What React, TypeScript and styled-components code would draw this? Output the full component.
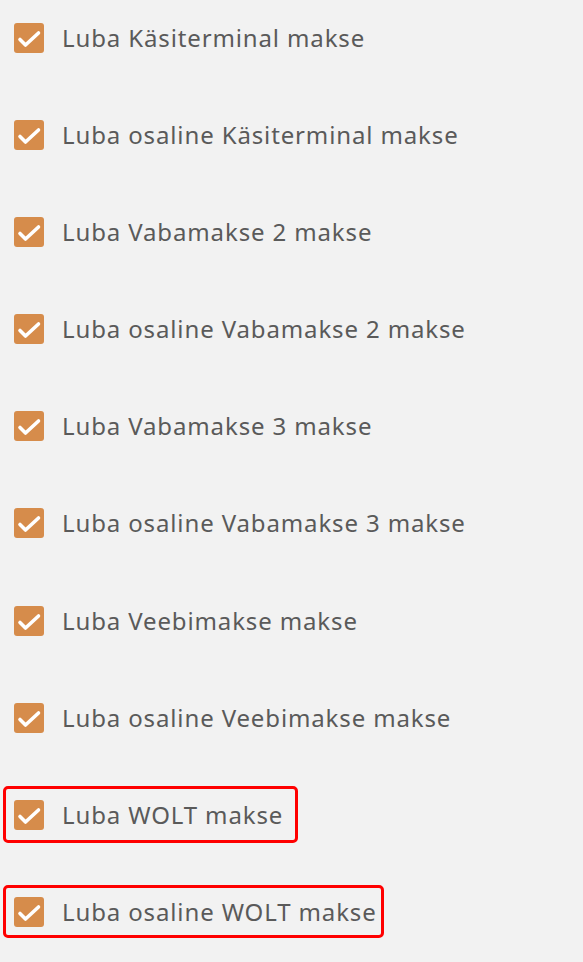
import styled, { createGlobalStyle } from "styled-components";

const GlobalStyle = createGlobalStyle`
  html, body {
    margin: 0;
    padding: 0;
    background: #f2f2f2;
  }
  body {
    font-family: "Noto Sans", "Open Sans", Arial, sans-serif;
  }
`;

type Frame = { top: number; right: number; bottom: number; left: number };

const List = styled.div`
  display: flex;
  flex-direction: column;
  align-items: flex-start;
  gap: 67.1px;
  padding: 23px 0 40px 14px;
  min-height: 100vh;
  box-sizing: border-box;
`;

const Option = styled.label<{ $frame?: Frame }>`
  position: relative;
  display: inline-flex;
  align-items: center;
  gap: 18px;
  height: 30px;
  cursor: pointer;

  ${(p) =>
    p.$frame &&
    `
    &::after {
      content: "";
      position: absolute;
      top: -${p.$frame.top}px;
      right: -${p.$frame.right}px;
      bottom: -${p.$frame.bottom}px;
      left: -${p.$frame.left}px;
      border: 3px solid #ff0000;
      border-radius: 5px;
      pointer-events: none;
    }
  `}
`;

const Box = styled.span`
  width: 30px;
  height: 30px;
  flex: none;
  border-radius: 3px;
  background: #d68c4b;
  display: flex;
  align-items: center;
  justify-content: center;
`;

const Label = styled.span`
  font-size: 24px;
  letter-spacing: 0.87px;
  color: #5a5a5a;
  line-height: 30px;
  white-space: nowrap;
`;

const Check = () => (
  <svg width="30" height="30" viewBox="0 0 30 30">
    <path
      d="M6 16.5 L11.5 22 L24.5 10"
      fill="none"
      stroke="#fff"
      strokeWidth="3.6"
      strokeLinecap="round"
      strokeLinejoin="round"
    />
  </svg>
);

const options: { text: string; frame?: Frame }[] = [
  { text: "Luba Käsiterminal makse" },
  { text: "Luba osaline Käsiterminal makse" },
  { text: "Luba Vabamakse 2 makse" },
  { text: "Luba osaline Vabamakse 2 makse" },
  { text: "Luba Vabamakse 3 makse" },
  { text: "Luba osaline Vabamakse 3 makse" },
  { text: "Luba Veebimakse makse" },
  { text: "Luba osaline Veebimakse makse" },
  { text: "Luba WOLT makse", frame: { top: 14, right: 15, bottom: 13, left: 11 } },
  { text: "Luba osaline WOLT makse", frame: { top: 12, right: 7, bottom: 11, left: 11 } },
];

export default function App() {
  return (
    <>
      <GlobalStyle />
      <List>
        {options.map((o) => (
          <Option key={o.text} $frame={o.frame}>
            <Box>
              <Check />
            </Box>
            <Label>{o.text}</Label>
          </Option>
        ))}
      </List>
    </>
  );
}
